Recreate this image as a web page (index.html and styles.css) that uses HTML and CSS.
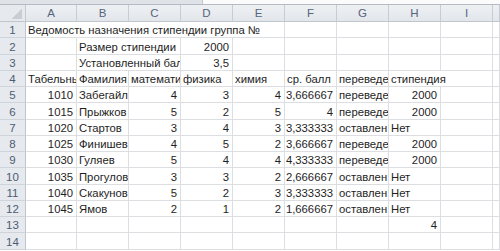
FILE: index.html
```html
<!DOCTYPE html>
<html lang="ru">
<head>
<meta charset="utf-8">
<title>Ведомость</title>
<link rel="stylesheet" href="styles.css">
</head>
<body>
<div class="topbar"><div class="tb-left"></div><div class="tb-right"></div></div>
<div class="sheet">
  <div class="corner"></div>
  <div class="ch">A</div><div class="ch">B</div><div class="ch">C</div><div class="ch">D</div><div class="ch">E</div><div class="ch">F</div><div class="ch">G</div><div class="ch">H</div><div class="ch">I</div><div class="ch"></div>

  <div class="rh">1</div>
  <div class="c s5">Ведомость назначения стипендии группа №</div><div class="c"></div><div class="c"></div><div class="c"></div><div class="c"></div><div class="c"></div>

  <div class="rh">2</div>
  <div class="c"></div><div class="c s2">Размер стипендии</div><div class="c n">2000</div><div class="c"></div><div class="c"></div><div class="c"></div><div class="c"></div><div class="c"></div><div class="c"></div>

  <div class="rh">3</div>
  <div class="c"></div><div class="c s2 clip">Установленный балл</div><div class="c n">3,5</div><div class="c"></div><div class="c"></div><div class="c"></div><div class="c"></div><div class="c"></div><div class="c"></div>

  <div class="rh">4</div>
  <div class="c clip">Табельный номер</div><div class="c clip">Фамилия</div><div class="c clip">математика</div><div class="c">физика</div><div class="c">химия</div><div class="c">ср. балл</div><div class="c clip">переведен</div><div class="c s2">стипендия</div><div class="c"></div>

  <div class="rh">5</div>
  <div class="c n">1010</div><div class="c clip">Забегайлов</div><div class="c n">4</div><div class="c n">3</div><div class="c n">4</div><div class="c n">3,666667</div><div class="c clip">переведен</div><div class="c n">2000</div><div class="c"></div><div class="c"></div>

  <div class="rh">6</div>
  <div class="c n">1015</div><div class="c clip">Прыжков</div><div class="c n">5</div><div class="c n">2</div><div class="c n">5</div><div class="c n">4</div><div class="c clip">переведен</div><div class="c n">2000</div><div class="c"></div><div class="c"></div>

  <div class="rh">7</div>
  <div class="c n">1020</div><div class="c clip">Стартов</div><div class="c n">3</div><div class="c n">4</div><div class="c n">3</div><div class="c n">3,333333</div><div class="c clip">оставлен</div><div class="c">Нет</div><div class="c"></div><div class="c"></div>

  <div class="rh">8</div>
  <div class="c n">1025</div><div class="c clip">Финишев</div><div class="c n">4</div><div class="c n">5</div><div class="c n">2</div><div class="c n">3,666667</div><div class="c clip">переведен</div><div class="c n">2000</div><div class="c"></div><div class="c"></div>

  <div class="rh">9</div>
  <div class="c n">1030</div><div class="c clip">Гуляев</div><div class="c n">5</div><div class="c n">4</div><div class="c n">4</div><div class="c n">4,333333</div><div class="c clip">переведен</div><div class="c n">2000</div><div class="c"></div><div class="c"></div>

  <div class="rh">10</div>
  <div class="c n">1035</div><div class="c clip">Прогулов</div><div class="c n">3</div><div class="c n">3</div><div class="c n">2</div><div class="c n">2,666667</div><div class="c clip">оставлен</div><div class="c">Нет</div><div class="c"></div><div class="c"></div>

  <div class="rh">11</div>
  <div class="c n">1040</div><div class="c clip">Скакунов</div><div class="c n">5</div><div class="c n">2</div><div class="c n">3</div><div class="c n">3,333333</div><div class="c clip">оставлен</div><div class="c">Нет</div><div class="c"></div><div class="c"></div>

  <div class="rh">12</div>
  <div class="c n">1045</div><div class="c clip">Ямов</div><div class="c n">2</div><div class="c n">1</div><div class="c n">2</div><div class="c n">1,666667</div><div class="c clip">оставлен</div><div class="c">Нет</div><div class="c"></div><div class="c"></div>

  <div class="rh">13</div>
  <div class="c"></div><div class="c"></div><div class="c"></div><div class="c"></div><div class="c"></div><div class="c"></div><div class="c"></div><div class="c n">4</div><div class="c"></div><div class="c"></div>

  <div class="rh">14</div>
  <div class="c"></div><div class="c"></div><div class="c"></div><div class="c"></div><div class="c"></div><div class="c"></div><div class="c"></div><div class="c"></div><div class="c"></div><div class="c"></div>
</div>
</body>
</html>
```

FILE: styles.css
```css
html, body {
  margin: 0;
  padding: 0;
  background: #ffffff;
  overflow: hidden;
  width: 500px;
  height: 251px;
}

body {
  font-family: "Liberation Sans", Arial, sans-serif;
  color: #1e1e1e;
}

.topbar {
  display: flex;
  height: 4px;
  border-bottom: 1px solid #b4bac3;
}

.tb-left {
  width: 202px;
  background: #dfe2e7;
}

.tb-right {
  flex: 1;
  background: #fbfbfc;
  border-left: 1px solid #c3c8cf;
}

.sheet {
  display: grid;
  grid-template-columns: 26px 51px repeat(8, 52px) 7px;
  grid-template-rows: 17px repeat(14, 16.25px);
  width: 500px;
}

.corner {
  position: relative;
  background: #e6e9ee;
  border-right: 1px solid #c5cad1;
  border-bottom: 1px solid #c0c6ce;
  box-sizing: border-box;
}

.corner::after {
  content: "";
  position: absolute;
  right: 3px;
  bottom: 2px;
  width: 10px;
  height: 10px;
  background: linear-gradient(135deg, transparent 50%, #c9ced5 50%);
}

.ch {
  display: flex;
  align-items: center;
  justify-content: center;
  background: linear-gradient(#eef0f3, #e2e6eb);
  border-right: 1px solid #c8cdd4;
  border-bottom: 1px solid #c0c6ce;
  box-sizing: border-box;
  font-size: 11.5px;
  color: #56667a;
}

.rh {
  display: flex;
  align-items: flex-end;
  justify-content: center;
  padding-bottom: 1px;
  background: #e6e9ee;
  border-right: 1px solid #c0c6ce;
  border-bottom: 1px solid #cfd4da;
  box-sizing: border-box;
  font-size: 11.5px;
  color: #4e5d70;
}

.c {
  display: flex;
  align-items: flex-end;
  padding: 0 2px 1px 2px;
  border-right: 1px solid #dcdee1;
  border-bottom: 1px solid #dcdee1;
  box-sizing: border-box;
  font-size: 11.3px;
  white-space: nowrap;
  min-width: 0;
}

.n {
  justify-content: flex-end;
  padding-right: 3px;
}

.clip {
  overflow: hidden;
}

.s2 {
  grid-column: span 2;
}

.s5 {
  grid-column: span 5;
}
```
